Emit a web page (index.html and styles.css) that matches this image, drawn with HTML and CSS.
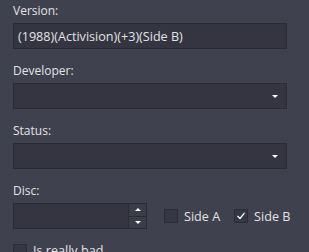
FILE: index.html
```html
<!DOCTYPE html>
<html lang="en">
<head>
    <meta charset="UTF-8">
    <title>Edit Game</title>
    <link rel="stylesheet" href="styles.css">
</head>
<body>
    <form class="panel">
        <div class="field">
            <label class="caption" for="version">Version:</label>
            <input class="box" type="text" id="version" value="(1988)(Activision)(+3)(Side B)">
        </div>

        <div class="field">
            <label class="caption">Developer:</label>
            <div class="box combo"><span class="arrow"></span></div>
        </div>

        <div class="field">
            <label class="caption">Status:</label>
            <div class="box combo"><span class="arrow"></span></div>
        </div>

        <div class="field">
            <label class="caption">Disc:</label>
            <div class="disc-row">
                <div class="box spin">
                    <span class="spin-value"></span>
                    <span class="spin-buttons">
                        <span class="spin-btn"><span class="tri up"></span></span>
                        <span class="spin-btn"><span class="tri down"></span></span>
                    </span>
                </div>
                <label class="check"><span class="mark"></span>Side A</label>
                <label class="check">
                    <span class="mark">
                        <svg width="12" height="12" viewBox="0 0 12 12"><polyline points="2.5,6 5,8.5 9.5,3" fill="none" stroke="#ffffff" stroke-width="1.2"/></svg>
                    </span>Side B
                </label>
            </div>
        </div>

        <label class="check bottom"><span class="mark"></span>Is really bad</label>
    </form>
</body>
</html>
```

FILE: styles.css
```css
html, body {
    margin: 0;
    background: #3f414e;
}
body {
    font-family: "Open Sans", "Noto Sans", sans-serif;
    font-size: 12px;
    color: #e2e2e6;
    overflow: hidden;
}
.panel {
    padding: 2px 22px 0 13px;
}
.field {
    margin-bottom: 13px;
}
.caption {
    display: block;
    height: 17px;
    line-height: 17px;
    margin-bottom: 4px;
}
.box {
    box-sizing: border-box;
    display: block;
    width: 100%;
    height: 26px;
    background: #343541;
    border: 1px solid #2a2b34;
    color: #e2e2e6;
    font: inherit;
    font-size: 12.6px;
    padding: 0 4px;
    margin: 0;
    outline: none;
}
.combo {
    position: relative;
}
.arrow {
    position: absolute;
    right: 8px;
    top: 11px;
    width: 0;
    height: 0;
    border-left: 3px solid transparent;
    border-right: 3px solid transparent;
    border-top: 3px solid #ffffff;
}
.disc-row {
    display: flex;
    align-items: center;
}
.spin {
    width: 134px;
    flex-shrink: 0;
    display: flex;
    padding: 0;
}
.spin-value {
    flex: 1;
}
.spin-buttons {
    width: 17px;
    display: flex;
    flex-direction: column;
    gap: 1px;
    background: #2a2b34;
    border-left: 1px solid #2a2b34;
}
.spin-btn {
    flex: 1;
    background: #3a3c48;
    display: flex;
    align-items: center;
    justify-content: center;
}
.tri {
    width: 0;
    height: 0;
    border-left: 3px solid transparent;
    border-right: 3px solid transparent;
}
.tri.up {
    border-bottom: 3px solid #ffffff;
}
.tri.down {
    border-top: 3px solid #ffffff;
}
.check {
    display: flex;
    align-items: center;
    gap: 6px;
    white-space: nowrap;
    font-size: 12.6px;
}
.disc-row .check:first-of-type {
    margin-left: 17px;
}
.disc-row .check + .check {
    margin-left: 14px;
}
.mark {
    box-sizing: border-box;
    flex-shrink: 0;
    display: flex;
    width: 14px;
    height: 14px;
    background: #353745;
    border: 1px solid #2c2d37;
}
.bottom {
    margin-top: 12px;
}
```
